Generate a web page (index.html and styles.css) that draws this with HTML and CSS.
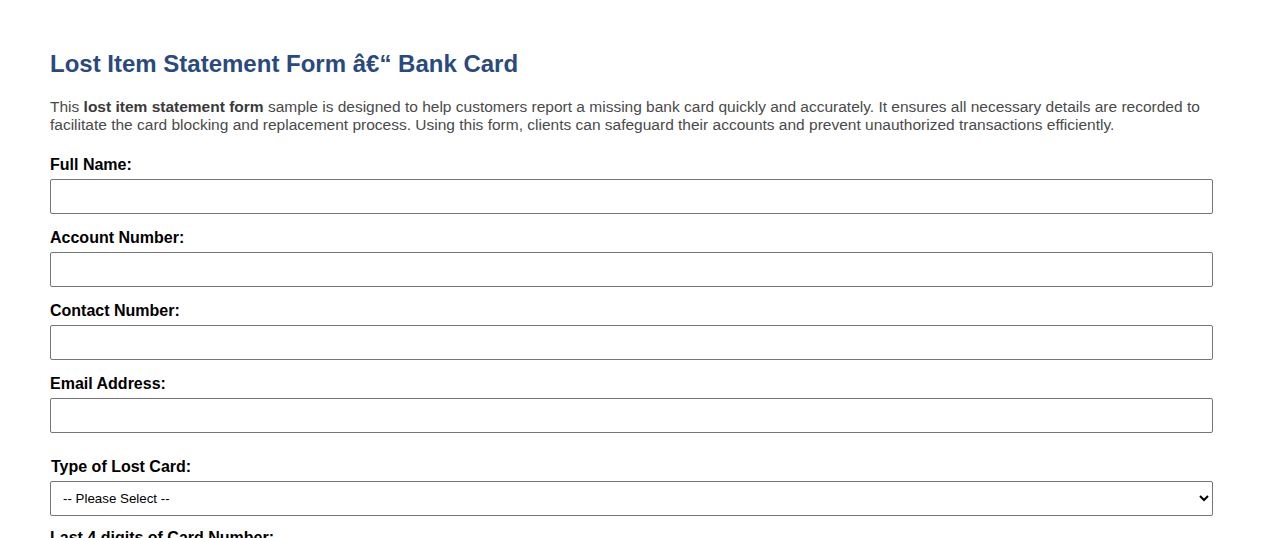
FILE: index.html
```html
<!DOCTYPE html>
<html lang="en">
<head>
<meta charset="utf-8">
<title>Lost Item Statement Form – Bank Card</title>
<link rel="stylesheet" href="styles.css">
</head>
<body>
<div class="page">
  <h2 class="title">Lost Item Statement Form â€“ Bank Card</h2>
  <p class="intro">This <strong>lost item statement form</strong> sample is designed to help customers report a missing bank card quickly and accurately. It ensures all necessary details are recorded to facilitate the card blocking and replacement process. Using this form, clients can safeguard their accounts and prevent unauthorized transactions efficiently.</p>
  <form class="form">
    <div class="field">
      <label class="label" for="fullname">Full Name:</label>
      <input class="input" id="fullname" type="text">
    </div>
    <div class="field">
      <label class="label" for="account">Account Number:</label>
      <input class="input" id="account" type="text">
    </div>
    <div class="field">
      <label class="label" for="contact">Contact Number:</label>
      <input class="input" id="contact" type="text">
    </div>
    <div class="field">
      <label class="label" for="email">Email Address:</label>
      <input class="input" id="email" type="email">
    </div>
    <div class="field field-select">
      <label class="label label-select" for="cardtype">Type of Lost Card:</label>
      <select class="select" id="cardtype">
        <option>-- Please Select --</option>
        <option>Debit Card</option>
        <option>Credit Card</option>
      </select>
    </div>
    <div class="field">
      <label class="label" for="last4">Last 4 digits of Card Number:</label>
      <input class="input" id="last4" type="text">
    </div>
  </form>
</div>
</body>
</html>
```
FILE: styles.css
```css
html, body {
  margin: 0;
  padding: 0;
  background: #ffffff;
}
body {
  font-family: "Liberation Sans", Arial, sans-serif;
  color: #000;
}
.page {
  padding: 50px 50px 40px;
}
.title {
  margin: 0 0 20px;
  font-size: 24px;
  line-height: 28px;
  font-weight: bold;
  color: #2a4a7f;
}
.intro {
  margin: 0 0 22px;
  font-size: 15.5px;
  line-height: 18px;
  color: #4a4a4a;
}
.intro strong {
  color: #3a3a3a;
}
.field {
  margin-bottom: 15px;
}
.label {
  display: block;
  font-size: 16px;
  line-height: 18px;
  font-weight: bold;
  margin-bottom: 5px;
}
.field-select {
  margin-top: 25px;
  margin-bottom: 13px;
}
.label-select {
  padding-left: 1px;
}
.input, .select {
  display: block;
  box-sizing: border-box;
  width: 100%;
  height: 35px;
  margin: 0;
  border: 1px solid #767676;
  border-radius: 2px;
  background: #fff;
  font-family: "Liberation Sans", Arial, sans-serif;
}
.input {
  padding: 8px;
  font-size: 16px;
}
.select {
  padding: 0 8px;
  font-size: 13.33px;
  color: #000;
}
```
